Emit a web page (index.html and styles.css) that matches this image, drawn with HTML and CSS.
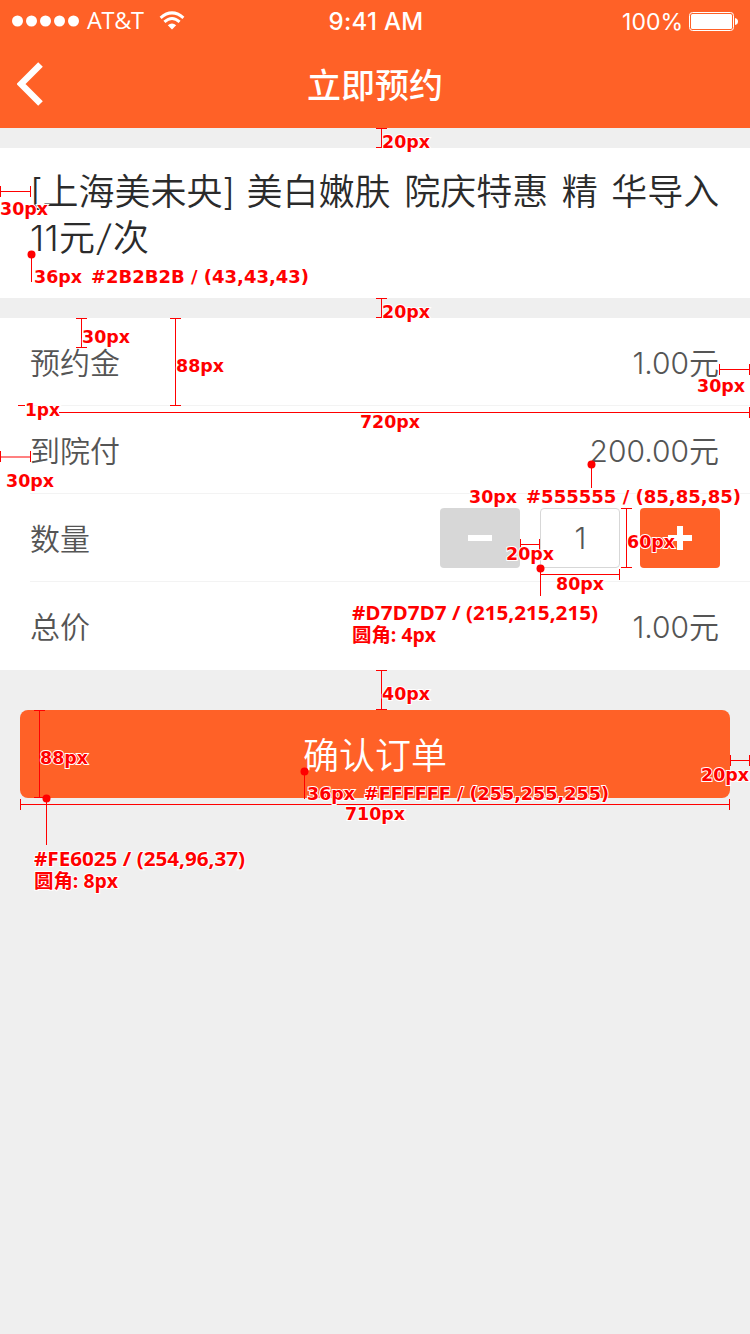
FILE: index.html
```html
<!DOCTYPE html>
<html lang="zh-CN">
<head>
<meta charset="utf-8">
<title>立即预约</title>
<link rel="stylesheet" href="styles.css">
</head>
<body>
<div class="screen">
  <header class="header">
    <div class="status">
      <div class="carrier">
        <svg class="dots" width="68" height="12" viewBox="0 0 68 12"><circle cx="5.5" cy="6" r="5.5"/><circle cx="19.5" cy="6" r="5.5"/><circle cx="33.5" cy="6" r="5.5"/><circle cx="47.5" cy="6" r="5.5"/><circle cx="61.5" cy="6" r="5.5"/></svg>
        <span class="operator">AT&amp;T</span>
        <svg class="wifi" width="26" height="20" viewBox="0 0 26 20"><path class="arc" d="M1.600 6.800Q13-3 24.400 6.800M5.400 10.900Q13 4.200 20.600 10.900"/><path class="fan" d="M8.800 14.200Q13 10.800 17.200 14.200L13 18.500Z"/></svg>
      </div>
      <span class="clock">9:41 AM</span>
      <div class="power">
        <span class="percent">100%</span>
        <svg class="battery" width="49" height="20" viewBox="0 0 49 20"><rect class="shell" x=".5" y=".5" width="44" height="18" rx="3"/><rect x="2" y="2" width="41" height="15" rx="1.5"/><path d="M46 6Q49 6.500 49 9.500T46 13Z"/></svg>
      </div>
    </div>
    <div class="nav">
      <svg class="back" width="26" height="44" viewBox="0 0 26 44"><path d="M23.500 2.500 4 22 23.500 41.500"/></svg>
      <h1 class="nav-title">立即预约</h1>
      <span class="back"></span>
    </div>
  </header>

  <section class="product"><span class="name-line"><span class="brand">[上海美未央]</span> 美白嫩肤 院庆特惠 精 华导入</span><span class="spec-line"><span class="ones">11</span>元<span class="slash">/</span>次</span></section>

  <section class="details">
    <div class="row"><span class="label">预约金</span><span class="value"><span class="num">1.00</span>元</span></div>
    <div class="row"><span class="label">到院付</span><span class="value"><span class="num">200.00</span>元</span></div>
    <div class="row"><span class="label">数量</span>
      <div class="stepper">
        <button class="step minus"><svg width="24" height="24"><path d="M0 12H24"/></svg></button>
        <span class="count">1</span>
        <button class="step plus"><svg width="24" height="24"><path d="M0 12H24M12 0V24"/></svg></button>
      </div>
    </div>
    <div class="row"><span class="label">总价</span><span class="value"><span class="num">1.00</span>元</span></div>
  </section>

  <button class="confirm">确认订单</button>

  <!-- Design measurement layer -->
  <svg class="specs" width="750" height="1334" viewBox="0 0 750 1334">
    <g class="lines">
      <path d="M376 128.500H387M381.500 128V148M376 147.500H382"/>
      <path d="M376 298.500H387M381.500 298V318M376 317.500H382"/>
      <path d="M0 191.500H31M.5 186V197M30.500 186V197"/>
      <path d="M31.500 254V282"/>
      <path d="M76 318.500H87M81.500 318V348M76 347.500H87"/>
      <path d="M170 318.500H181M175.500 318V406M170 405.500H181"/>
      <path d="M719 369.500H750M719.500 364V375M749.500 364V375"/>
      <path d="M18 405.500H25M59 412.500H750M749.500 407V418"/>
      <path class="faint" d="M0 457H31"/><path d="M.5 451V462M30.500 451V462"/>
      <path d="M591.500 464V488"/>
      <path d="M520 544.500H540M520.500 539V550M539.500 539V550"/>
      <path d="M621 508.500H632M626.500 508V568M621 567.500H632"/>
      <path d="M540.500 568V596M540 574.500H620M619.500 569V580"/>
      <path d="M376 670.500H387M381.500 670V710M376 709.500H387"/>
      <path d="M34 710.500H45M39.500 710V798M34 797.500H45"/>
      <path d="M304.500 771V799M46.500 798V845"/>
      <path d="M20 804.500H730M20.500 799V810M729.500 799V810"/>
      <path d="M730 760.500H750M730.500 755V766M749.500 755V766"/>
    </g>
    <g class="points"><circle cx="31.500" cy="254.500" r="4"/><circle cx="591.500" cy="464.500" r="4"/><circle cx="540.500" cy="568.500" r="4"/><circle cx="304.500" cy="771.500" r="4"/><circle cx="46.500" cy="798.500" r="4"/></g>
    <g class="labels">
      <text x="382" y="148" textLength="48" lengthAdjust="spacingAndGlyphs">20px</text>
      <text x="0" y="215" textLength="48" lengthAdjust="spacingAndGlyphs">30px</text>
      <text x="34" y="283" textLength="48" lengthAdjust="spacingAndGlyphs">36px</text>
      <text x="91" y="283" textLength="218" lengthAdjust="spacingAndGlyphs">#2B2B2B / (43,43,43)</text>
      <text x="382" y="318" textLength="48" lengthAdjust="spacingAndGlyphs">20px</text>
      <text x="82" y="343" textLength="48" lengthAdjust="spacingAndGlyphs">30px</text>
      <text x="176" y="372" textLength="48" lengthAdjust="spacingAndGlyphs">88px</text>
      <text x="697" y="392" textLength="48" lengthAdjust="spacingAndGlyphs">30px</text>
      <text x="25" y="416" textLength="35" lengthAdjust="spacingAndGlyphs">1px</text>
      <text x="360" y="428" textLength="60" lengthAdjust="spacingAndGlyphs">720px</text>
      <text x="6" y="487" textLength="48" lengthAdjust="spacingAndGlyphs">30px</text>
      <text x="469" y="503" textLength="48" lengthAdjust="spacingAndGlyphs">30px</text>
      <text x="526" y="503" textLength="215" lengthAdjust="spacingAndGlyphs">#555555 / (85,85,85)</text>
      <text x="506" y="560" textLength="48" lengthAdjust="spacingAndGlyphs">20px</text>
      <text x="627" y="548" textLength="48" lengthAdjust="spacingAndGlyphs">60px</text>
      <text x="556" y="590" textLength="48" lengthAdjust="spacingAndGlyphs">80px</text>
      <text x="382" y="700" textLength="48" lengthAdjust="spacingAndGlyphs">40px</text>
      <text x="40" y="764" textLength="48" lengthAdjust="spacingAndGlyphs">88px</text>
      <text x="701" y="781" textLength="48" lengthAdjust="spacingAndGlyphs">20px</text>
      <text x="345" y="820" textLength="60" lengthAdjust="spacingAndGlyphs">710px</text>
      <text x="307" y="800" textLength="48" lengthAdjust="spacingAndGlyphs">36px</text>
      <text x="364" y="800" textLength="245" lengthAdjust="spacingAndGlyphs">#FFFFFF / (255,255,255)</text>
      <g class="humanist">
        <text x="352" y="620" textLength="246" lengthAdjust="spacingAndGlyphs">#D7D7D7 / (215,215,215)</text>
        <text x="352" y="642" textLength="84" lengthAdjust="spacingAndGlyphs">圆角: 4px</text>
        <text x="34" y="866" textLength="211" lengthAdjust="spacingAndGlyphs">#FE6025 / (254,96,37)</text>
        <text x="34" y="888" textLength="84" lengthAdjust="spacingAndGlyphs">圆角: 8px</text>
      </g>
    </g>
  </svg>
</div>
</body>
</html>
```
FILE: styles.css
```css
* { box-sizing: border-box; }
body { margin: 0; background: #efefef; font-family: Inter, "Noto Sans CJK SC", sans-serif; }
button { border: 0; padding: 0; font: inherit; }
svg { display: block; flex: none; }
.screen { position: relative; width: 750px; height: 1334px; overflow: hidden; }

.header { height: 128px; background: #ff6127; color: #fff; }
.status { height: 40px; display: grid; grid-template-columns: 1fr auto 1fr; align-items: center; padding: 0 12px; font-size: 24px; line-height: 40px; }
.status svg { fill: #fff; }
.carrier { display: flex; align-items: center; }
.operator { font-family: "Open Sans", sans-serif; font-weight: 400; font-size: 23.500px; letter-spacing: -.3px; margin-left: 7px; width: 58px; padding-bottom: 2px; }
.wifi { margin-left: 14px; }
.wifi .arc { fill: none; stroke: #fff; stroke-width: 3; }
.clock { font-weight: 500; font-size: 24px; letter-spacing: .3px; padding: 1px 0 0 2px; }
.power { height: 40px; display: flex; align-items: center; justify-content: flex-end; gap: 6px; font-weight: 400; font-size: 23px; }
.percent { padding-top: 1px; }
.battery { margin-top: 2px; }
.power .shell { fill: none; stroke: #fff; }
.nav { height: 88px; display: flex; align-items: center; justify-content: space-between; padding: 0 17px; }
.back { width: 26px; fill: none; stroke: #fff; stroke-width: 6.500; }
.nav-title { margin: 0; font-size: 34px; font-weight: 500; line-height: 84px; padding-top: 4px; }

.product { margin-top: 20px; height: 150px; padding: 21px 30px; background: #fff; color: #2b2b2b; font-size: 36px; line-height: 46px; font-weight: 350; display: flex; flex-direction: column; }
.name-line { white-space: nowrap; word-spacing: 3.400px; }
.brand { margin-right: -2px; }
.ones { letter-spacing: .3px; }
.slash { display: inline-block; width: 18px; text-align: center; transform: skewX(-8deg); }

.details { margin-top: 20px; height: 352px; background: #fff; padding-left: 30px; color: #555; font-size: 30px; font-weight: 350; }
.row { height: 88px; padding-right: 30px; border-bottom: 1px solid #f3f3f3; display: flex; align-items: center; justify-content: space-between; }
.row:last-child { border-bottom: 0; }
.label { padding-bottom: 2px; }
.value { padding: 0 1px 2px 0; }
.stepper { display: flex; gap: 20px; }
.step, .count { width: 80px; height: 60px; border-radius: 4px; display: flex; align-items: center; justify-content: center; }
.step svg { fill: none; stroke: #fff; stroke-width: 6; }
.minus { background: #d7d7d7; }
.plus { background: #ff6127; }
.count { border: 1px solid #d7d7d7; padding-left: 1px; }

.confirm { display: block; width: 710px; height: 88px; margin: 40px 20px 0; padding-bottom: 3px; border-radius: 8px; background: #ff6127; color: #fff; font-size: 36px; font-weight: 350; }

.specs { position: absolute; left: 0; top: 0; }
.lines { fill: none; stroke: #f00; stroke-width: 1; shape-rendering: crispEdges; }
.lines .faint { stroke: #ff8080; stroke-width: 2; }
.points { fill: #f00; }
.labels { fill: #f00; stroke: #fff; stroke-width: 2px; paint-order: stroke; font: bold 18px "DejaVu Sans", sans-serif; }
.humanist { font: bold 19px "Open Sans", "Noto Sans CJK SC", sans-serif; }
```
